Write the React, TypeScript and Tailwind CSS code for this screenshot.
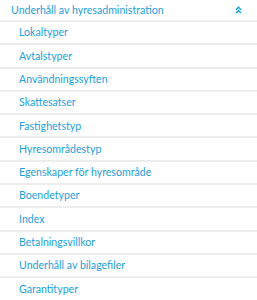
const items = [
  "Lokaltyper",
  "Avtalstyper",
  "Användningssyften",
  "Skattesatser",
  "Fastighetstyp",
  "Hyresområdestyp",
  "Egenskaper för hyresområde",
  "Boendetyper",
  "Index",
  "Betalningsvillkor",
  "Underhåll av bilagefiler",
  "Garantityper",
];

const App = () => {
  return (
    <div
      className="w-[257px] h-[300px] overflow-hidden bg-white text-[#1ba1dc]"
      style={{ fontFamily: "Lato, sans-serif" }}
    >
      {/* Header */}
      <div className="flex items-center justify-between h-[22px] pl-[11px] pr-[15px] border-b-2 border-[#ededed]">
        <span className="text-[10.6px] leading-none">Underhåll av hyresadministration</span>
        <svg width="7" height="8" viewBox="0 0 7 8" fill="none" stroke="#1ba1dc" strokeWidth="1.5">
          <path d="M1 3.8 L3.5 1.3 L6 3.8" />
          <path d="M1 7 L3.5 4.5 L6 7" />
        </svg>
      </div>

      {/* Lista */}
      {items.map((item) => (
        <div
          key={item}
          className="flex items-center h-[23.3px] pl-[19px] border-b-2 border-[#ededed] text-[10.6px] leading-none"
        >
          {item}
        </div>
      ))}
    </div>
  );
};

export default App;
